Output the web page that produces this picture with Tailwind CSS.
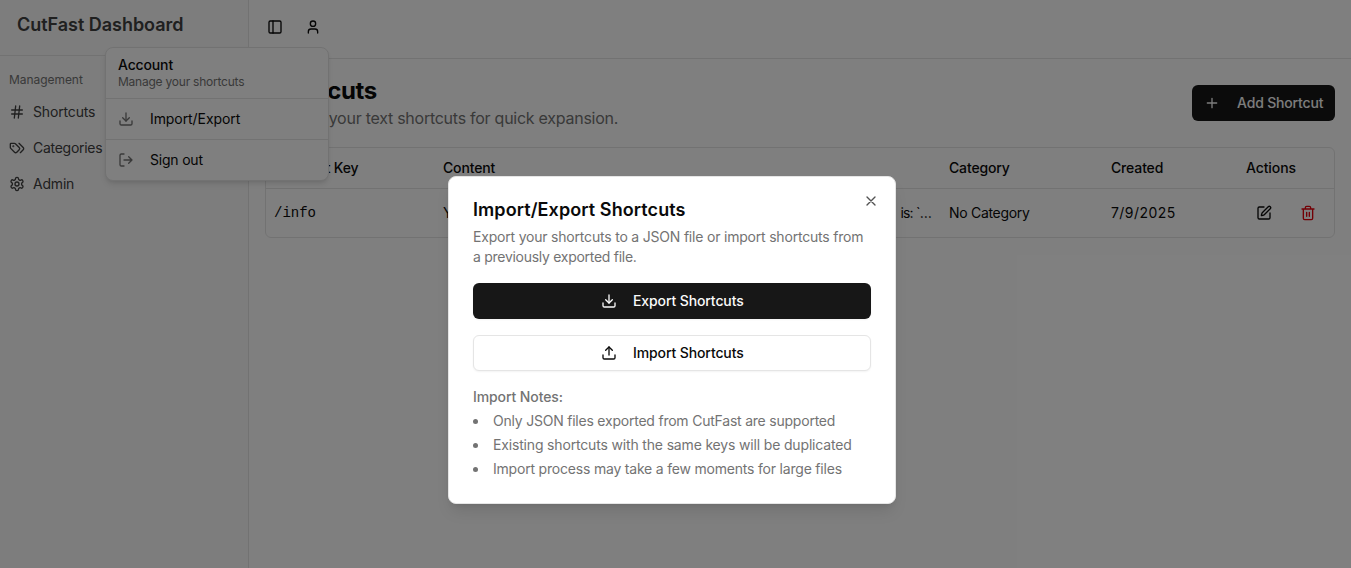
<!DOCTYPE html>
<html lang="en">
<head>
<meta charset="utf-8">
<title>CutFast Dashboard</title>
<script src="https://cdn.jsdelivr.net/npm/@tailwindcss/browser@4"></script>
</head>
<body class="relative h-[568px] w-[1351px] overflow-hidden bg-white font-['Inter',sans-serif] text-sm text-neutral-950">
<svg class="hidden">
  <defs>
    <g id="download"><path d="M12 15V3"/><path d="M21 15v4a2 2 0 0 1-2 2H5a2 2 0 0 1-2-2v-4"/><path d="m7 10 5 5 5-5"/></g>
    <g id="upload"><path d="M12 3v12"/><path d="m17 8-5-5-5 5"/><path d="M21 15v4a2 2 0 0 1-2 2H5a2 2 0 0 1-2-2v-4"/></g>
  </defs>
</svg>
<div class="flex h-full">
  <aside class="flex w-[249px] shrink-0 flex-col border-r border-neutral-200 bg-neutral-50 text-neutral-700">
    <div class="h-14 border-b border-neutral-200 pt-[11px] pl-[17px]">
      <h2 class="text-lg leading-7 font-semibold tracking-[-0.03px]"><span>CutFast Dashboard</span></h2>
    </div>
    <div class="pt-2 pl-[9px]">
      <div class="flex h-8 items-center text-xs tracking-[-0.05px] text-neutral-500"><span>Management</span></div>
      <nav class="flex flex-col gap-1">
        <a class="flex h-8 items-center gap-2">
          <svg class="size-4" viewBox="0 0 24 24" fill="none" stroke="currentColor" stroke-width="2" stroke-linecap="round" stroke-linejoin="round"><path d="M4 9h16M4 15h16M10 3 8 21M16 3l-2 18"/></svg>
          <span class="tracking-[-0.15px]">Shortcuts</span>
        </a>
        <a class="flex h-8 items-center gap-2">
          <svg class="size-4" viewBox="0 0 24 24" fill="none" stroke="currentColor" stroke-width="2" stroke-linecap="round" stroke-linejoin="round"><path d="m15 5 6.3 6.3a2.4 2.4 0 0 1 0 3.4L17 19"/><path d="M9.586 5.586A2 2 0 0 0 8.172 5H3a1 1 0 0 0-1 1v5.172a2 2 0 0 0 .586 1.414L8.29 18.29a2.426 2.426 0 0 0 3.42 0l3.58-3.58a2.426 2.426 0 0 0 0-3.42z"/><circle cx="6.5" cy="9.5" r=".5" fill="currentColor"/></svg>
          <span class="tracking-[-0.28px]">Categories</span>
        </a>
        <a class="flex h-8 items-center gap-2">
          <svg class="size-4" viewBox="0 0 24 24" fill="none" stroke="currentColor" stroke-width="2" stroke-linecap="round" stroke-linejoin="round"><path d="M12.22 2h-.44a2 2 0 0 0-2 2v.18a2 2 0 0 1-1 1.73l-.43.25a2 2 0 0 1-2 0l-.15-.08a2 2 0 0 0-2.73.73l-.22.38a2 2 0 0 0 .73 2.73l.15.1a2 2 0 0 1 1 1.72v.51a2 2 0 0 1-1 1.74l-.15.09a2 2 0 0 0-.73 2.73l.22.38a2 2 0 0 0 2.73.73l.15-.08a2 2 0 0 1 2 0l.43.25a2 2 0 0 1 1 1.73V20a2 2 0 0 0 2 2h.44a2 2 0 0 0 2-2v-.18a2 2 0 0 1 1-1.73l.43-.25a2 2 0 0 1 2 0l.15.08a2 2 0 0 0 2.73-.73l.22-.39a2 2 0 0 0-.73-2.73l-.15-.08a2 2 0 0 1-1-1.74v-.5a2 2 0 0 1 1-1.74l.15-.09a2 2 0 0 0 .73-2.73l-.22-.38a2 2 0 0 0-2.73-.73l-.15.08a2 2 0 0 1-2 0l-.43-.25a2 2 0 0 1-1-1.73V4a2 2 0 0 0-2-2z"/><circle cx="12" cy="12" r="3"/></svg>
          <span class="tracking-[-0.2px]">Admin</span>
        </a>
      </nav>
    </div>
  </aside>
  <main class="min-w-0 flex-1">
    <header class="flex h-[59px] items-center gap-[22px] border-b border-neutral-200 pb-[4px] pl-[18px]">
      <svg class="size-4" viewBox="0 0 24 24" fill="none" stroke="currentColor" stroke-width="2" stroke-linecap="round" stroke-linejoin="round"><rect width="18" height="18" x="3" y="3" rx="2"/><path d="M9 3v18"/></svg>
      <svg class="size-4" viewBox="0 0 24 24" fill="none" stroke="currentColor" stroke-width="2" stroke-linecap="round" stroke-linejoin="round"><circle cx="12" cy="7" r="4"/><path d="M19 21v-2a4 4 0 0 0-4-4H9a4 4 0 0 0-4 4v2"/></svg>
    </header>
    <div class="px-4 pt-4">
      <div class="flex items-center justify-between">
        <div>
          <h1 class="text-2xl leading-8 font-bold tracking-[-0.38px]"><span>Shortcuts</span></h1>
          <p class="-mt-px pb-px text-base leading-6 tracking-[-0.26px] text-neutral-500"><span>Manage your text shortcuts for quick expansion.</span></p>
        </div>
        <button class="flex h-9 w-[143px] items-center gap-[17px] rounded-md bg-neutral-900 pl-3 font-medium tracking-[-0.17px] text-neutral-50">
          <svg class="size-4" viewBox="0 0 24 24" fill="none" stroke="currentColor" stroke-width="2" stroke-linecap="round" stroke-linejoin="round"><path d="M5 12h14M12 5v14"/></svg>
          <span>Add Shortcut</span>
        </button>
      </div>
      <div class="mt-4 h-[91px] w-[1070px] rounded-md border border-neutral-200">
        <div class="grid h-[41px] grid-cols-[169px_506px_162px_135px_96px] items-center border-b border-neutral-200 pl-2 font-medium tracking-[-0.15px]">
          <span>Shortcut Key</span><span>Content</span><span>Category</span><span>Created</span><span class="tracking-[-0.1px]">Actions</span>
        </div>
        <div class="grid h-12 grid-cols-[169px_506px_162px_135px_96px] items-center pl-2">
          <span class="font-['Liberation_Mono',monospace]">/info</span>
          <div class="flex justify-between pr-[18px]"><span>Y</span><span class="tracking-[-0.8px]">is: `…</span></div>
          <span class="tracking-[-0.3px]">No Category</span><span class="tracking-[0.45px]">7/9/2025</span>
          <div class="flex gap-7 pl-[10px]">
            <svg class="size-4" viewBox="0 0 24 24" fill="none" stroke="currentColor" stroke-width="2" stroke-linecap="round" stroke-linejoin="round"><path d="M12 3H5a2 2 0 0 0-2 2v14a2 2 0 0 0 2 2h14a2 2 0 0 0 2-2v-7"/><path d="M18.375 2.625a1 1 0 0 1 3 3l-9.013 9.014a2 2 0 0 1-.853.505l-2.873.84a.5.5 0 0 1-.62-.62l.84-2.873a2 2 0 0 1 .506-.852z"/></svg>
            <svg class="size-4 text-[#e7000b]" viewBox="0 0 24 24" fill="none" stroke="currentColor" stroke-width="2" stroke-linecap="round" stroke-linejoin="round"><path d="M3 6h18M19 6v14a2 2 0 0 1-2 2H7a2 2 0 0 1-2-2V6M8 6V4a2 2 0 0 1 2-2h4a2 2 0 0 1 2 2v2M10 11v6M14 11v6"/></svg>
          </div>
        </div>
      </div>
    </div>
  </main>
</div>

<div class="absolute top-[47px] left-[105px] w-56 rounded-lg border border-neutral-200 bg-white shadow-md">
  <div class="h-[51px] border-b border-neutral-200 pt-2 pl-3">
    <p class="leading-[18px] font-medium tracking-[-0.15px]"><span>Account</span></p>
    <p class="text-xs leading-4 tracking-[-0.23px] text-neutral-500"><span>Manage your shortcuts</span></p>
  </div>
  <div class="flex h-[41px] items-center gap-4 border-b border-neutral-200 pl-3">
    <svg class="size-4 text-neutral-500" viewBox="0 0 24 24" fill="none" stroke="currentColor" stroke-width="2" stroke-linecap="round" stroke-linejoin="round"><use href="#download"/></svg>
    <span class="tracking-[-0.08px]">Import/Export</span>
  </div>
  <div class="flex h-10 items-center gap-4 pl-3">
    <svg class="size-4 text-neutral-500" viewBox="0 0 24 24" fill="none" stroke="currentColor" stroke-width="2" stroke-linecap="round" stroke-linejoin="round"><path d="m16 17 5-5-5-5M21 12H9M9 21H5a2 2 0 0 1-2-2V5a2 2 0 0 1 2-2h4"/></svg>
    <span class="tracking-[-0.2px]">Sign out</span>
  </div>
</div>

<div class="absolute inset-0 bg-black/50"></div>

<div role="dialog" class="absolute top-[176px] left-[448px] h-[328px] w-[448px] rounded-lg border border-neutral-200 bg-white p-6 shadow-lg">
  <svg class="absolute top-4 right-4 size-4 opacity-70" viewBox="0 0 24 24" fill="none" stroke="currentColor" stroke-width="2" stroke-linecap="round" stroke-linejoin="round"><path d="M18 6 6 18M6 6l12 12"/></svg>
  <h2 class="text-lg leading-[18px] font-semibold tracking-[0.08px]"><span>Import/Export Shortcuts</span></h2>
  <p class="mt-2 leading-5 whitespace-nowrap text-neutral-500"><span class="tracking-[-0.2px]">Export your shortcuts to a JSON file or import shortcuts from</span><br><span class="tracking-[-0.28px]">a previously exported file.</span></p>
  <button class="mt-4 flex h-9 w-full items-center gap-4 rounded-md bg-neutral-900 pl-32 font-medium tracking-[-0.11px] text-neutral-50 shadow-xs">
    <svg class="size-4" viewBox="0 0 24 24" fill="none" stroke="currentColor" stroke-width="2" stroke-linecap="round" stroke-linejoin="round"><use href="#download"/></svg>
    <span>Export Shortcuts</span>
  </button>
  <button class="mt-4 flex h-9 w-full items-center gap-4 rounded-md border border-neutral-200 bg-white pl-[127px] font-medium tracking-[-0.11px] shadow-xs">
    <svg class="size-4" viewBox="0 0 24 24" fill="none" stroke="currentColor" stroke-width="2" stroke-linecap="round" stroke-linejoin="round"><use href="#upload"/></svg>
    <span>Import Shortcuts</span>
  </button>
  <div class="mt-4 text-neutral-500">
    <p class="leading-5 font-medium tracking-[-0.1px]"><span>Import Notes:</span></p>
    <ul class="mt-1 flex flex-col gap-1 leading-5 whitespace-nowrap">
      <li class="flex items-center gap-[15px]"><i class="size-[5px] rounded-full bg-neutral-500"></i><span class="tracking-[-0.22px]">Only JSON files exported from CutFast are supported</span></li>
      <li class="flex items-center gap-[15px]"><i class="size-[5px] rounded-full bg-neutral-500"></i><span class="tracking-[-0.165px]">Existing shortcuts with the same keys will be duplicated</span></li>
      <li class="flex items-center gap-[15px]"><i class="size-[5px] rounded-full bg-neutral-500"></i><span class="tracking-[-0.2px]">Import process may take a few moments for large files</span></li>
    </ul>
  </div>
</div>
</body>
</html>
